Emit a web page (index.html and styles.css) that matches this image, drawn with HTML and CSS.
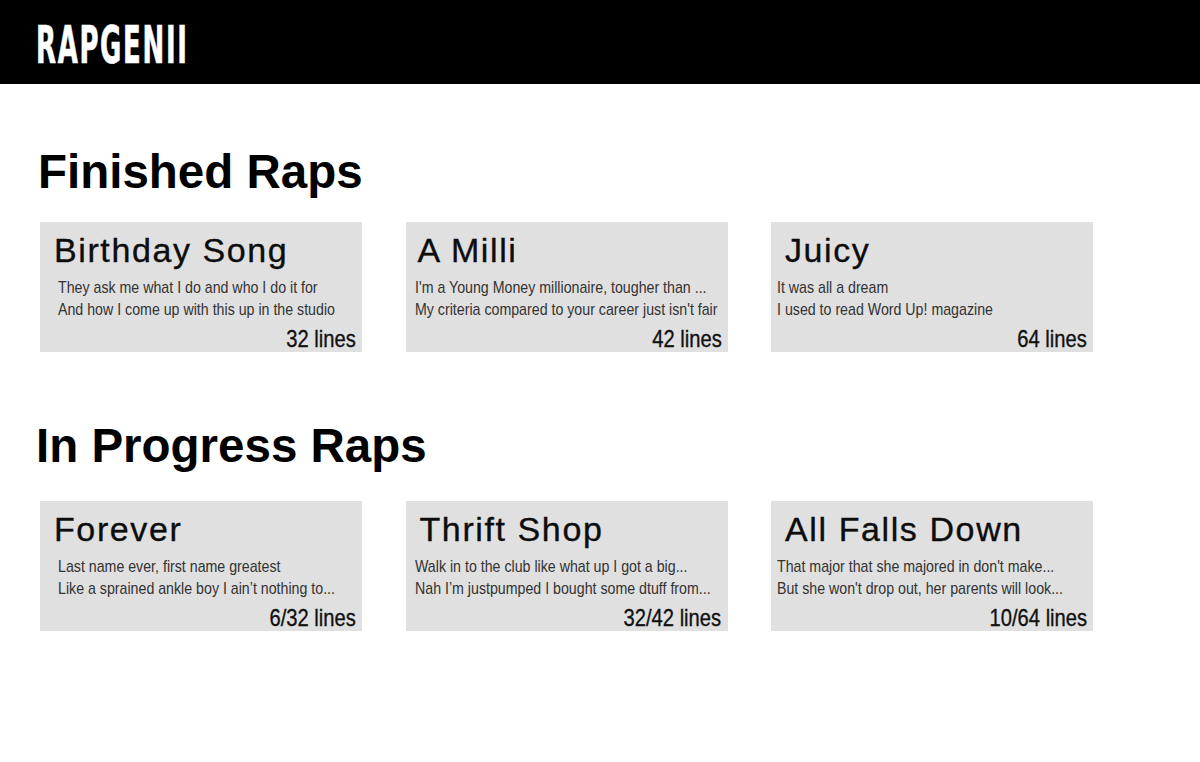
FILE: index.html
```html
<!DOCTYPE html>
<html lang="en">
<head>
<meta charset="utf-8">
<title>RapGenii</title>
<link rel="stylesheet" href="styles.css">
</head>
<body>
<header class="topbar">
  <div class="logo">RAPGENII</div>
</header>
<main class="page">
  <section class="section section--finished">
    <h1 class="section-title">Finished Raps</h1>
    <div class="cards">
      <article class="card card--wide">
        <h2 class="card-title">Birthday Song</h2>
        <div class="lyrics">
          <p>They ask me what I do and who I do it for</p>
          <p>And how I come up with this up in the studio</p>
        </div>
        <div class="count">32 lines</div>
      </article>
      <article class="card card--mid">
        <h2 class="card-title card-title--tight">A Milli</h2>
        <div class="lyrics">
          <p>I'm a Young Money millionaire, tougher than ...</p>
          <p>My criteria compared to your career just isn't fair</p>
        </div>
        <div class="count">42 lines</div>
      </article>
      <article class="card card--narrow">
        <h2 class="card-title">Juicy</h2>
        <div class="lyrics">
          <p>It was all a dream</p>
          <p>I used to read Word Up! magazine</p>
        </div>
        <div class="count">64 lines</div>
      </article>
    </div>
  </section>
  <section class="section section--progress">
    <h1 class="section-title">In Progress Raps</h1>
    <div class="cards">
      <article class="card card--wide">
        <h2 class="card-title">Forever</h2>
        <div class="lyrics">
          <p>Last name ever, first name greatest</p>
          <p>Like a sprained ankle boy I ain’t nothing to...</p>
        </div>
        <div class="count">6/32 lines</div>
      </article>
      <article class="card card--mid">
        <h2 class="card-title">Thrift Shop</h2>
        <div class="lyrics">
          <p>Walk in to the club like what up I got a big...</p>
          <p>Nah I’m justpumped I bought some dtuff from...</p>
        </div>
        <div class="count">32/42 lines</div>
      </article>
      <article class="card card--narrow">
        <h2 class="card-title">All Falls Down</h2>
        <div class="lyrics">
          <p>That major that she majored in don't make...</p>
          <p>But she won't drop out, her parents will look...</p>
        </div>
        <div class="count">10/64 lines</div>
      </article>
    </div>
  </section>
</main>
</body>
</html>
```
FILE: styles.css
```css
* { box-sizing: border-box; }

html, body {
  margin: 0;
  padding: 0;
  background: #ffffff;
}

body {
  font-family: "Liberation Sans", Arial, sans-serif;
  color: #000;
}

.topbar {
  height: 84px;
  background: #000;
  display: flex;
  align-items: center;
  padding-left: 36px;
}

.logo {
  font-family: "DejaVu Sans Condensed", "DejaVu Sans", sans-serif;
  font-weight: 700;
  font-size: 52px;
  line-height: 52px;
  color: #fff;
  letter-spacing: 3px;
  -webkit-text-stroke: 0.7px #fff;
  transform: scaleX(0.555);
  transform-origin: left center;
  margin-top: 5px;
  white-space: nowrap;
}

.page {
  padding-left: 38px;
}

.section-title {
  margin: 0;
  font-size: 47.5px;
  line-height: 54px;
  font-weight: 700;
}

.section--finished .section-title {
  margin-top: 61px;
  margin-bottom: 23px;
}

.section--progress .section-title {
  margin-top: 67px;
  margin-bottom: 28px;
  margin-left: -2px;
}

.cards {
  display: grid;
  grid-template-columns: repeat(3, 322px);
  column-gap: 43.5px;
  margin-left: 2px;
}

.card {
  height: 130px;
  background: #e0e0e0;
  display: flex;
  flex-direction: column;
  padding: 11px 6px 1px 14px;
}

.card-title {
  margin: 0;
  font-size: 34px;
  line-height: 34px;
  font-weight: 400;
  letter-spacing: 1.6px;
  color: #0d0d0d;
  -webkit-text-stroke: 0.35px #0d0d0d;
  white-space: nowrap;
}

.card-title--tight {
  margin-left: -2px;
}

.lyrics {
  margin-top: 10px;
  font-size: 17px;
  line-height: 22px;
  color: #333;
  white-space: nowrap;
  transform: scaleX(0.835);
  transform-origin: left top;
}

.lyrics p { margin: 0; }

.card--wide .lyrics { margin-left: 4px; }
.card--mid .lyrics { margin-left: -5px; }
.card--narrow .lyrics { margin-left: -8px; }

.count {
  margin-top: auto;
  align-self: flex-end;
  font-size: 24px;
  line-height: 24px;
  color: #111;
  -webkit-text-stroke: 0.35px #111;
  white-space: nowrap;
  transform: scaleX(0.84);
  transform-origin: right center;
}
```
